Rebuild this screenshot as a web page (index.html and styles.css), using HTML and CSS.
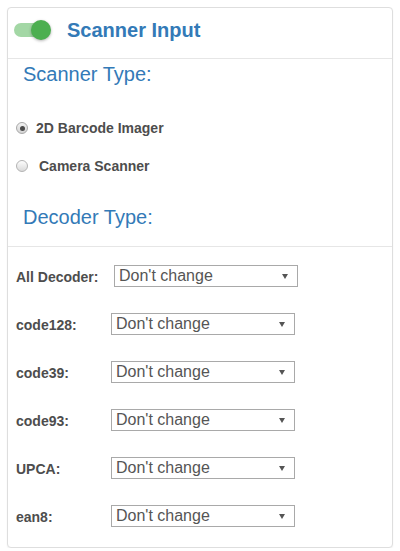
FILE: index.html
```html
<!DOCTYPE html>
<html lang="en">
<head>
<meta charset="utf-8">
<title>Scanner Input</title>
<link rel="stylesheet" href="styles.css">
</head>
<body>
<div class="card">
  <div class="card-header">
    <span class="switch"><span class="switch-track"></span><span class="switch-thumb"></span></span>
    <h2 class="card-title">Scanner Input</h2>
  </div>
  <div class="section">
    <h3 class="section-title">Scanner Type:</h3>
    <div class="radio-row radio-first"><span class="radio checked"><span class="radio-dot"></span></span><span class="radio-label">2D Barcode Imager</span></div>
    <div class="radio-row radio-second"><span class="radio"></span><span class="radio-label spaced">Camera Scanner</span></div>
    <h3 class="section-title decoder-title">Decoder Type:</h3>
  </div>
  <div class="decoders">
    <div class="row row-wide"><span class="row-label">All Decoder:</span><span class="select"><span class="select-text">Don't change</span><span class="caret"></span></span></div>
    <div class="row"><span class="row-label">code128:</span><span class="select"><span class="select-text">Don't change</span><span class="caret"></span></span></div>
    <div class="row"><span class="row-label">code39:</span><span class="select"><span class="select-text">Don't change</span><span class="caret"></span></span></div>
    <div class="row"><span class="row-label">code93:</span><span class="select"><span class="select-text">Don't change</span><span class="caret"></span></span></div>
    <div class="row"><span class="row-label">UPCA:</span><span class="select"><span class="select-text">Don't change</span><span class="caret"></span></span></div>
    <div class="row"><span class="row-label">ean8:</span><span class="select"><span class="select-text">Don't change</span><span class="caret"></span></span></div>
  </div>
</div>
</body>
</html>
```
FILE: styles.css
```css
* { box-sizing: border-box; }

body {
  margin: 0;
  background: #ffffff;
  font-family: "Liberation Sans", Arial, sans-serif;
}

.card {
  margin: 7px 7px 0 7px;
  width: 386px;
  border: 1px solid #dedede;
  border-radius: 4px;
  box-shadow: 0 1px 2px rgba(0, 0, 0, 0.06);
  background: #fff;
}

.card-header {
  display: flex;
  align-items: center;
  padding: 9px 0 15px 6px;
  border-bottom: 1px solid #e6e6e6;
}

.switch {
  position: relative;
  width: 37px;
  height: 20px;
  flex: none;
}

.switch-track {
  position: absolute;
  left: 0;
  top: 3px;
  width: 34px;
  height: 14px;
  border-radius: 7px;
  background: #a3d7a5;
}

.switch-thumb {
  position: absolute;
  right: 0;
  top: 0;
  width: 20px;
  height: 20px;
  border-radius: 50%;
  background: #4caf50;
  box-shadow: 0 1px 3px rgba(0, 0, 0, 0.3);
}

.card-title {
  margin: 0 0 0 16px;
  font-size: 20px;
  line-height: 26px;
  font-weight: bold;
  color: #337ab7;
}

.section {
  padding: 4px 0 18px 0;
  border-bottom: 1px solid #e6e6e6;
}

.section-title {
  margin: 0;
  padding-left: 15px;
  font-size: 20px;
  line-height: 22px;
  font-weight: normal;
  color: #337ab7;
}

.decoder-title {
  margin-top: 30px;
}

.radio-row {
  display: flex;
  align-items: center;
  height: 20px;
  padding-left: 8px;
}

.radio-first { margin-top: 33px; }
.radio-second { margin-top: 18px; }

.radio {
  width: 12px;
  height: 12px;
  border-radius: 50%;
  border: 1px solid #b3b3b3;
  background: linear-gradient(#fdfdfd, #dadada);
  display: flex;
  align-items: center;
  justify-content: center;
  flex: none;
}

.radio.checked {
  background: linear-gradient(#f2f2f2, #d4d4d4);
  border-color: #a8a8a8;
}

.radio-dot {
  width: 5px;
  height: 5px;
  border-radius: 50%;
  background: #4a4a4a;
}

.radio-label {
  margin-left: 8px;
  font-size: 14px;
  line-height: 20px;
  font-weight: bold;
  color: #4d4d4d;
}

.radio-label.spaced { margin-left: 11px; }

.decoders {
  display: flex;
  flex-direction: column;
  gap: 26px;
  padding: 18px 0 20px 8px;
}

.row {
  display: flex;
  align-items: center;
  height: 22px;
}

.row-label {
  width: 95px;
  flex: none;
  font-size: 14px;
  font-weight: bold;
  color: #4d4d4d;
  padding-top: 1px;
}

.row-wide .row-label { width: 98px; }

.select {
  display: flex;
  align-items: center;
  justify-content: space-between;
  width: 184px;
  height: 22px;
  border: 1px solid #a9a9a9;
  padding: 0 9px 0 4px;
  background: #fff;
}

.select-text {
  font-size: 16px;
  line-height: 20px;
  color: #555555;
}

.caret {
  width: 0;
  height: 0;
  border-left: 3px solid transparent;
  border-right: 3px solid transparent;
  border-top: 5px solid #555555;
}
```
